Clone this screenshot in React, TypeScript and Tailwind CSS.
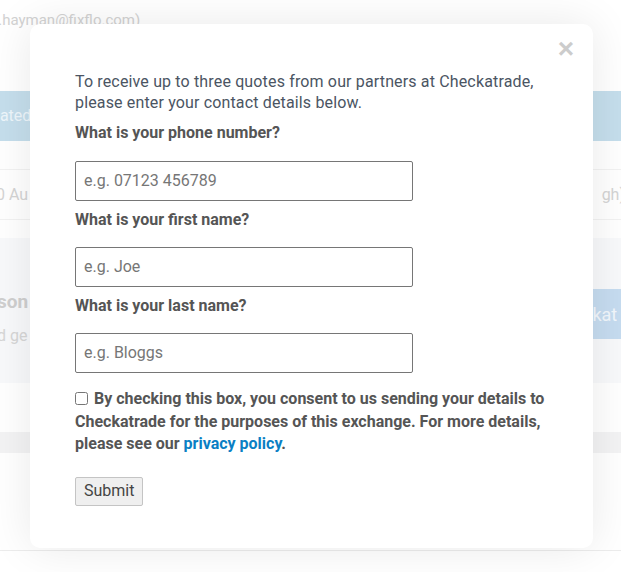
import React from "react";

export default function App() {
  return (
    <div className="relative w-[621px] h-[572px] overflow-hidden bg-white font-['Roboto','Liberation_Sans',sans-serif]">
      {/* faded background page */}
      <div className="flex flex-col">
        <div className="h-[40px] pl-0 pt-[10px] text-[15px] text-[#d2d2d2] -ml-[6px] leading-[20px]">r.hayman@fixflo.com)</div>
        <div className="h-[51px]" />
        <div className="h-[50px] bg-[#c5deec] flex items-center text-[16px] text-[#eef6fb] -ml-[4px]">lated</div>
        <div className="h-[29px] border-b border-[#f2f2f2]" />
        <div className="h-[50px] border-b border-[#f2f2f2] flex items-center justify-between text-[16px] text-[#d4d4d4] -ml-[4px] -mr-[4px]">
          <span>0 Au</span>
          <span>gh)</span>
        </div>
        <div className="h-[18px]" />
        <div className="h-[145px] bg-[#f8f9fb] flex justify-between">
          <div className="flex flex-col pt-[50px] -ml-[3px]">
            <span className="text-[19px] font-bold text-[#cfcfcf] leading-[28px]">son</span>
            <span className="text-[16px] text-[#d6d6d6] mt-[8px]">d ge</span>
          </div>
          <div className="mt-[51px] h-[50px] w-[40px] bg-[#c6dcf0] flex items-center text-[18px] text-[#f2f7fc] pl-[2px]">ckat</div>
        </div>
        <div className="h-[49px]" />
        <div className="h-[21px] bg-[#f3f3f4]" />
        <div className="h-[97px]" />
        <div className="h-[1px] bg-[#ececec]" />
      </div>

      {/* modal */}
      <div className="absolute left-[30px] top-[24px] w-[563px] h-[524px] bg-white rounded-[10px] shadow-[0_0_45px_rgba(0,0,0,0.09)] pl-[45px] pr-[40px] pt-[47px]">
        <span className="absolute right-[19px] top-[11px] text-[28px] leading-[28px] font-bold text-[#cccccc] font-['Liberation_Sans',sans-serif]">×</span>
        <p className="text-[16px] leading-[21px] tracking-[0.15px] text-[#4b5563] w-[470px]">
          To receive up to three quotes from our partners at Checkatrade, please enter your contact details below.
        </p>
        <div className="mt-[9px] text-[16px] leading-[22px] font-bold text-[#555555]">What is your phone number?</div>
        <input
          className="mt-[17px] block w-[338px] h-[40px] border border-[#767676] rounded-[2px] px-[8px] pb-[2px] text-[16px] placeholder:text-[#767676] outline-none"
          placeholder="e.g. 07123 456789"
        />
        <div className="mt-[8px] text-[16px] leading-[22px] font-bold text-[#555555]">What is your first name?</div>
        <input
          className="mt-[16px] block w-[338px] h-[40px] border border-[#767676] rounded-[2px] px-[8px] pb-[2px] text-[16px] placeholder:text-[#767676] outline-none"
          placeholder="e.g. Joe"
        />
        <div className="mt-[8px] text-[16px] leading-[22px] font-bold text-[#555555]">What is your last name?</div>
        <input
          className="mt-[16px] block w-[338px] h-[40px] border border-[#767676] rounded-[2px] px-[8px] pb-[2px] text-[16px] placeholder:text-[#767676] outline-none"
          placeholder="e.g. Bloggs"
        />
        <p className="mt-[15px] text-[16px] leading-[22.5px] font-bold text-[#555555] w-[470px]">
          <input type="checkbox" className="mr-[6px] align-[-1px] w-[13px] h-[13px]" />
          By checking this box, you consent to us sending your details to Checkatrade for the purposes of this exchange. For more details, please see our <a className="text-[#0a7fc4]">privacy policy</a>.
        </p>
        <button className="mt-[21px] h-[29px] px-[8px] bg-[#efefef] border border-[#c4c4c4] rounded-[2px] text-[16px] text-[#444444]">
          Submit
        </button>
      </div>
    </div>
  );
}
